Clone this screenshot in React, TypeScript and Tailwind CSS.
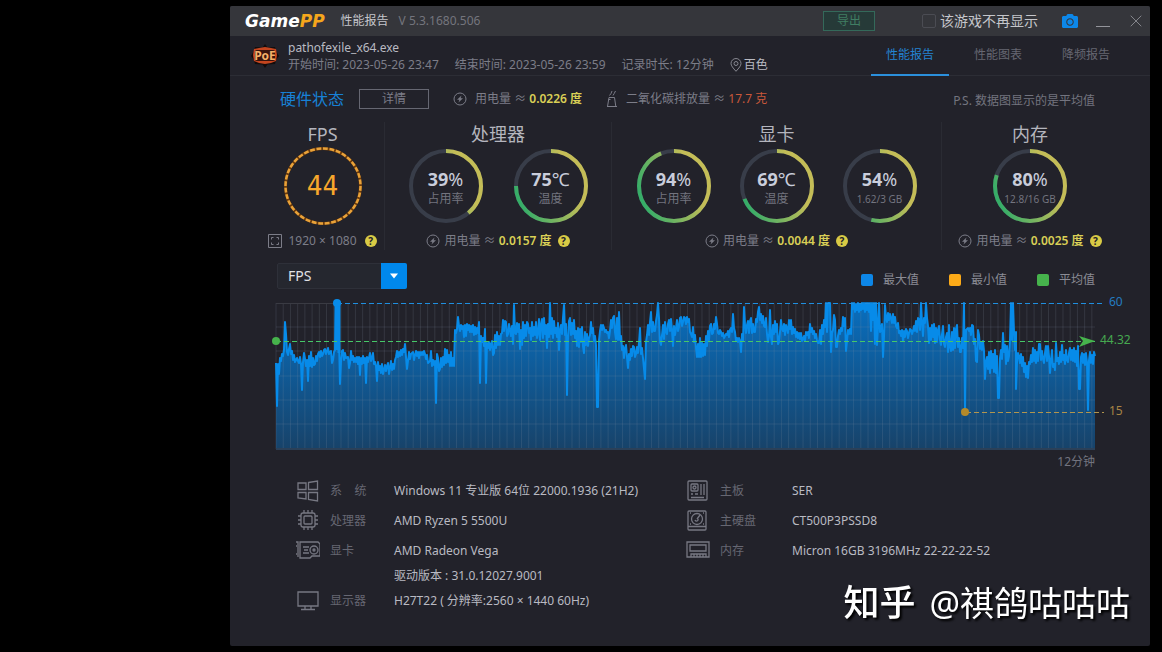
import { useId, useState, type ReactNode } from 'react';
import { FaCamera } from 'react-icons/fa';
import { LuX } from 'react-icons/lu';

// Chart space: x 276..1095 is the recording time, y 303 is 60 fps and y 449 is 0 fps.
// Each sample is [x, first y, second y].
const SAMPLES: [number, number, number][] = [
  [276, 363, 406], [278, 364, 374], [280, 358, 361], [282, 354, 356], [284, 350, 322], [286, 334, 352],
  [288, 355, 349], [290, 344, 354], [292, 351, 360], [294, 355, 362], [297, 358, 361], [299, 363, 357],
  [301, 364, 390], [303, 362, 353], [305, 359, 366], [307, 360, 381], [309, 356, 366], [311, 352, 367],
  [313, 358, 365], [315, 364, 356], [317, 361, 354], [319, 352, 357], [321, 351, 356], [323, 354, 350],
  [325, 349, 354], [327, 351, 348], [329, 354, 352], [331, 351, 363], [333, 360, 352], [335, 350, 303],
  [337, 303, 303], [339, 340, 384], [341, 362, 351], [343, 350, 360], [345, 353, 358], [348, 357, 368],
  [350, 363, 351], [352, 360, 356], [354, 362, 358], [356, 362, 357], [358, 364, 357], [360, 375, 358],
  [362, 364, 356], [364, 363, 358], [366, 383, 357], [368, 362, 358], [370, 353, 361], [372, 358, 353],
  [374, 364, 362], [376, 366, 381], [378, 362, 370], [380, 366, 373], [382, 364, 374], [384, 370, 365],
  [386, 371, 366], [388, 363, 374], [390, 368, 361], [392, 370, 364], [394, 369, 360], [396, 357, 351],
  [398, 357, 352], [400, 356, 350], [402, 355, 349], [404, 352, 344], [406, 357, 369], [408, 361, 352],
  [410, 359, 354], [413, 352, 360], [415, 355, 351], [417, 356, 352], [419, 358, 352], [421, 355, 352],
  [423, 355, 351], [425, 354, 359], [427, 355, 363], [430, 361, 351], [432, 366, 360], [434, 365, 361],
  [436, 403, 354], [438, 358, 371], [440, 369, 358], [442, 367, 357], [444, 365, 349], [446, 363, 350],
  [448, 362, 355], [450, 366, 352], [452, 366, 358], [454, 366, 330], [456, 333, 329], [458, 317, 326],
  [460, 331, 325], [462, 329, 326], [464, 337, 325], [466, 336, 324], [468, 330, 325], [470, 332, 326],
  [472, 332, 325], [474, 335, 327], [476, 334, 328], [478, 333, 322], [480, 383, 336], [482, 342, 338],
  [484, 346, 329], [486, 383, 343], [488, 348, 342], [490, 350, 344], [492, 341, 355], [494, 353, 335],
  [496, 348, 332], [498, 345, 336], [500, 345, 334], [502, 333, 320], [504, 331, 321], [506, 322, 336],
  [508, 334, 324], [510, 330, 336], [512, 326, 344], [514, 305, 333], [516, 334, 323], [518, 332, 324],
  [520, 349, 330], [522, 345, 322], [524, 338, 325], [526, 336, 322], [528, 324, 333], [530, 328, 340],
  [532, 322, 336], [534, 327, 335], [536, 322, 338], [538, 333, 319], [540, 340, 325], [542, 319, 338],
  [544, 318, 334], [546, 325, 348], [548, 324, 337], [550, 303, 334], [552, 318, 338], [554, 321, 333],
  [556, 328, 337], [558, 323, 350], [560, 330, 325], [562, 334, 318], [564, 305, 335], [566, 324, 395],
  [568, 338, 321], [570, 318, 335], [572, 323, 334], [574, 320, 338], [576, 331, 346], [578, 328, 347],
  [580, 329, 342], [582, 327, 346], [584, 353, 332], [586, 345, 334], [588, 346, 338], [590, 335, 322],
  [592, 333, 328], [594, 341, 336], [596, 345, 407], [598, 407, 340], [600, 331, 325], [602, 330, 325],
  [604, 328, 332], [606, 330, 333], [608, 332, 338], [610, 331, 320], [612, 328, 318], [614, 316, 332],
  [616, 339, 318], [618, 340, 312], [620, 340, 336], [622, 350, 346], [624, 358, 348], [626, 345, 357],
  [628, 368, 354], [630, 360, 349], [632, 356, 346], [634, 347, 357], [636, 354, 347], [638, 353, 343],
  [640, 328, 354], [642, 348, 358], [645, 379, 342], [647, 335, 325], [649, 335, 322], [651, 312, 332],
  [653, 322, 331], [655, 331, 321], [657, 315, 303], [659, 318, 342], [661, 345, 335], [663, 325, 339],
  [665, 322, 332], [667, 334, 324], [669, 320, 331], [671, 319, 330], [673, 346, 326], [675, 335, 328],
  [677, 320, 331], [679, 327, 318], [681, 317, 326], [683, 322, 317], [685, 318, 324], [687, 317, 322],
  [689, 319, 332], [691, 334, 337], [693, 327, 342], [695, 335, 348], [697, 357, 344], [699, 357, 338],
  [701, 357, 343], [703, 356, 344], [705, 355, 336], [707, 346, 331], [709, 340, 326], [711, 324, 334],
  [713, 333, 324], [715, 329, 317], [717, 324, 333], [719, 334, 330], [721, 332, 336], [723, 333, 338],
  [725, 336, 334], [727, 335, 331], [729, 337, 330], [731, 328, 332], [733, 314, 328], [735, 332, 341],
  [737, 338, 342], [739, 338, 341], [741, 352, 334], [743, 341, 307], [745, 325, 333], [747, 325, 321],
  [749, 333, 321], [751, 318, 333], [753, 324, 332], [755, 332, 319], [757, 322, 312], [759, 307, 320],
  [761, 314, 323], [763, 316, 326], [765, 327, 318], [767, 334, 342], [769, 336, 310], [771, 337, 344],
  [773, 325, 334], [775, 321, 332], [777, 324, 344], [779, 342, 332], [781, 320, 329], [783, 331, 324],
  [785, 335, 325], [787, 328, 333], [789, 320, 329], [791, 320, 334], [793, 327, 333], [795, 329, 337],
  [797, 332, 338], [799, 333, 339], [801, 333, 341], [803, 339, 336], [805, 341, 332], [807, 335, 332],
  [809, 338, 324], [811, 332, 328], [813, 334, 331], [815, 338, 334], [817, 340, 343], [819, 343, 330],
  [821, 344, 325], [823, 334, 320], [825, 327, 303], [827, 332, 303], [829, 303, 303], [831, 352, 333],
  [833, 330, 315], [835, 320, 347], [837, 347, 336], [839, 330, 334], [841, 328, 331], [843, 317, 326],
  [845, 318, 351], [847, 341, 330], [849, 334, 329], [851, 334, 303], [853, 309, 303], [855, 312, 304],
  [857, 310, 303], [859, 312, 304], [861, 310, 303], [863, 309, 303], [865, 312, 303], [867, 310, 303],
  [869, 312, 303], [871, 331, 303], [873, 320, 303], [875, 344, 303], [877, 345, 326], [879, 303, 332],
  [881, 330, 324], [883, 357, 337], [885, 305, 318], [887, 322, 313], [889, 320, 314], [891, 318, 323],
  [893, 314, 323], [895, 317, 326], [897, 328, 323], [899, 333, 331], [901, 336, 330], [903, 341, 331],
  [905, 337, 329], [907, 331, 338], [909, 333, 329], [911, 330, 334], [913, 331, 326], [915, 331, 321],
  [917, 332, 318], [919, 320, 330], [921, 303, 322], [923, 336, 318], [925, 323, 303], [927, 318, 326],
  [929, 343, 328], [931, 340, 325], [933, 337, 324], [935, 343, 328], [937, 342, 330], [939, 326, 340],
  [941, 345, 334], [943, 326, 344], [945, 347, 337], [947, 333, 352], [949, 325, 347], [951, 351, 332],
  [953, 350, 328], [955, 348, 329], [957, 325, 347], [959, 338, 352], [961, 352, 338], [963, 348, 303],
  [965, 412, 330], [967, 329, 328], [969, 331, 328], [971, 335, 325], [973, 326, 344], [975, 339, 361],
  [977, 362, 330], [979, 335, 349], [981, 342, 350], [983, 341, 351], [985, 379, 362], [987, 357, 369],
  [989, 352, 373], [991, 351, 368], [993, 354, 372], [995, 350, 373], [997, 356, 398], [999, 398, 358],
  [1001, 350, 359], [1003, 333, 352], [1005, 345, 364], [1007, 346, 361], [1009, 356, 340], [1011, 303, 340],
  [1013, 303, 332], [1015, 350, 332], [1016, 389, 362], [1018, 353, 356], [1020, 363, 354], [1022, 366, 357],
  [1024, 372, 363], [1026, 377, 366], [1028, 378, 362], [1030, 364, 355], [1032, 362, 348], [1034, 361, 350],
  [1036, 363, 352], [1038, 361, 344], [1040, 344, 360], [1042, 351, 359], [1044, 363, 353], [1046, 346, 361],
  [1048, 346, 356], [1050, 373, 360], [1052, 350, 367], [1054, 364, 370], [1056, 343, 361], [1058, 358, 364],
  [1060, 352, 362], [1062, 345, 360], [1064, 355, 364], [1066, 350, 360], [1068, 362, 353], [1070, 348, 360],
  [1072, 350, 361], [1074, 348, 362], [1076, 351, 366], [1078, 346, 389], [1080, 389, 357], [1082, 353, 363],
  [1084, 354, 365], [1086, 353, 362], [1088, 410, 360], [1090, 352, 363], [1092, 355, 364], [1094, 352, 356],
];

const LINE = SAMPLES.map(([x, a, b]) => `${x},${a} ${x + 1},${b}`).join(' ');
const COLUMNS = Array.from({ length: 114 }, (_, i) => 276 + i * 7.22);
const ROWS = [327, 351, 376, 400, 424];

function BoltIcon() {
  return (
    <svg className="size-3.5 shrink-0" viewBox="0 0 14 14" fill="none" stroke="#7c7d88" aria-hidden>
      <circle cx="7" cy="7" r="6" />
      <path d="M8.5 3.5 4 7.8h2.4L5.5 10.500 10 6.300H7.600z" fill="#7c7d88" stroke="none" />
    </svg>
  );
}

function ChimneyIcon() {
  return (
    <svg className="h-[18px] w-3 shrink-0" viewBox="0 0 12 18" fill="none" stroke="#7c7d88" aria-hidden>
      <path d="M3 7.500h5.500l1.300 9H1.500zM1 16.500h10M2.500 9.500h2M3.500 5.500l1.500-2 1-2.500M7 5.500l1.200-2L9.500 1" />
    </svg>
  );
}

function PinIcon() {
  return (
    <svg className="h-3.5 w-3 shrink-0" viewBox="0 0 12 14" fill="none" stroke="#85868f" aria-hidden>
      <path d="M6 13.300C3 10 1 7.700 1 5.500a5 5 0 0 1 10 0c0 2.200-2 4.500-5 7.800z" />
      <circle cx="6" cy="5.500" r="2" />
    </svg>
  );
}

function GameIcon() {
  return (
    <svg className="h-6 w-7" viewBox="0 0 28 24" aria-hidden>
      <path d="M14 0l2.500 3.500L24 3l1 4 3 5-3 4-1 4-7.500.5L14 24l-2.500-3.500L4 20l-1-4-3-4 3-5 1-4 7.500.5z" fill="#120c0c" />
      <path d="M3 5l5-1 6-1 6 1 5 1 1 6-1 6-5 2-6 1-6-1-5-2-1-6z" fill="#c4451f" />
      <rect x="4" y="6" width="20" height="11" rx="2" fill="#38140d" />
      <text x="14" y="16" textAnchor="middle" fontSize="12" fontWeight="700" fill="#f3b069">PoE</text>
    </svg>
  );
}

function Help() {
  return (
    <button type="button" aria-label="说明" className="ml-0.5 flex size-3 shrink-0 items-center justify-center rounded-full bg-[#d9cb45] text-[10px] leading-3 font-bold text-[#22222a]">
      ?
    </button>
  );
}

function Energy({ value }: { value: string }) {
  return (
    <div className="mt-1.5 flex h-[18px] items-center justify-center gap-1 text-xs text-[#7c7d88]">
      <BoltIcon />
      <span>用电量 ≈ <b className="font-semibold text-[#d9cf56]">{value} 度</b></span>
      <Help />
    </div>
  );
}

function Gauge({ percent, value, unit, label }: { percent: number; value: number; unit: string; label: string }) {
  const id = useId();
  return (
    <div className="grid size-[74px] place-items-center">
      <svg className="col-start-1 row-start-1 size-[74px]" viewBox="0 0 74 74" fill="none" strokeWidth="4" aria-hidden>
        <defs>
          <linearGradient id={id} gradientUnits="userSpaceOnUse" x1="0" y1="60" x2="74" y2="30">
            <stop offset="0.1" stopColor="#36ad68" />
            <stop offset="0.8" stopColor="#c4bd57" />
          </linearGradient>
        </defs>
        <circle cx="37" cy="37" r="35" stroke="#383d49" />
        <path d="M37 2a35 35 0 0 1 0 70a35 35 0 0 1 0-70" stroke={`url(#${id})`} pathLength={100} strokeDasharray={`${percent} 100`} />
      </svg>
      <div className="col-start-1 row-start-1 pt-1.5 text-center">
        <p className="text-lg leading-5 text-[#c9cddb]"><b>{value}</b>{unit}</p>
        <p className={label.includes('GB') ? 'text-[10px] leading-5 text-[#73747f]' : 'text-xs leading-5 text-[#73747f]'}>{label}</p>
      </div>
    </div>
  );
}

function Panel({ title, last, children }: { title: string; last?: boolean; children: ReactNode }) {
  return (
    <section className={last ? 'min-w-0' : 'min-w-0 border-r border-[#2a2b33]'}>
      <h2 className="text-center text-lg leading-6 text-[#b4b5bd]">{title}</h2>
      {children}
    </section>
  );
}

function Legend({ color, label }: { color: string; label: string }) {
  return (
    <li className="flex items-center gap-2.5">
      <span className={`size-3 rounded-xs ${color}`} />
      {label}
    </li>
  );
}

function FpsChart() {
  return (
    <svg className="block w-full" viewBox="268 293 866 179" role="img" aria-label="FPS">
      <defs>
        <linearGradient id="fps-area" gradientUnits="userSpaceOnUse" x1="0" y1="303" x2="0" y2="449">
          <stop offset="0" stopColor="#0088f0" stopOpacity="0.75" />
          <stop offset="1" stopColor="#0088f0" stopOpacity="0.32" />
        </linearGradient>
      </defs>
      <polygon points={`276,449 ${LINE} 1095,449`} fill="url(#fps-area)" />
      <g stroke="#8d97a8" strokeOpacity="0.18">
        {COLUMNS.map((x) => (
          <line key={x} x1={x} x2={x} y1="303" y2="449" />
        ))}
        {ROWS.map((y) => (
          <line key={y} x1="276" x2="1095" y1={y} y2={y} />
        ))}
      </g>
      <line x1="276" x2="337" y1="303.500" y2="303.500" stroke="#3a3b43" />
      <line x1="276" x2="1095" y1="449" y2="449" stroke="#2b4058" strokeWidth="2" />
      <polyline points={LINE} fill="none" stroke="#078be9" strokeWidth="2" strokeLinejoin="round" />
      <path d="M336 350V303h3v50" fill="none" stroke="#078be9" strokeWidth="3" />
      <g fill="none" strokeDasharray="5 3">
        <line x1="337" x2="1104" y1="303.500" y2="303.500" stroke="#1f8fe0" />
        <line x1="276" x2="1095" y1="341.500" y2="341.500" stroke="#46c768" />
        <line x1="966" x2="1104" y1="412.500" y2="412.500" stroke="#b1954e" />
      </g>
      <circle cx="337" cy="303" r="4" fill="#078be9" />
      <circle cx="276" cy="341" r="4" fill="#46b34c" />
      <circle cx="965" cy="412" r="4" fill="#b58a2a" />
      <path d="M1079 336l16 5-16 6 4-6z" fill="#46b34c" />
      <g fontSize="12">
        <text x="1109" y="306" fill="#247cc0">60</text>
        <text x="1100" y="344" fill="#46a850">44.32</text>
        <text x="1109" y="415" fill="#a98445">15</text>
        <text x="1095" y="466" textAnchor="end" fill="#73747f">12分钟</text>
      </g>
    </svg>
  );
}

const ICONS: Record<string, ReactNode> = {
  system: <path d="M2 4h8v6.500H2zM12.500 3.500l9-1.500v8.500h-9zM2 13.500h8V20l-8-1zM12.500 13.500h9V22l-9-1.500z" />,
  cpu: (
    <>
      <rect x="5" y="4" width="14" height="14" rx="2" />
      <rect x="8" y="7" width="8" height="8" rx="1" />
      <path d="M8 4V1M12 4V1M16 4V1M8 21v-3M12 21v-3M16 21v-3M5 7H2M5 11H2M5 15H2M22 7h-3M22 11h-3M22 15h-3" />
    </>
  ),
  gpu: (
    <>
      <path d="M0 3h2v15M0 7h1M0 15h1M4 3h18l2 2v12h-8l-2 2H4zM7 8h6M8 11h4M7 14h6" />
      <circle cx="18" cy="11" r="4" />
      <circle cx="18" cy="11" r="1" />
    </>
  ),
  display: <path d="M2 3h20v14H2zM9 17v3M15 17v3M5 20.500h14" />,
  board: (
    <>
      <rect x="2" y="2" width="19" height="19" rx="1" />
      <rect x="5" y="5" width="7" height="7" rx="1" />
      <circle cx="8.500" cy="8.500" r="1.500" />
      <path d="M15 5v11M18 5v11M5 15h2M9 15h3M5 18.500h13" />
    </>
  ),
  disk: (
    <>
      <rect x="2" y="2" width="18" height="19" rx="1" />
      <circle cx="11" cy="10" r="5.500" />
      <path d="M11 10l3-4M9 11a1.500 1.500 0 1 0 3-1M2 17.500h18M4 4h1M17 4h1M4 15h1M17 15h1" />
    </>
  ),
  memory: <path d="M1 3h22v15h-3v-3H5v3H1zM4 6h16v6H4zM5 18h15M8 15v3M11 15v3M14 15v3M17 15v3" />,
};

function Spec({ icon, label, children }: { icon: string; label: string; children: ReactNode }) {
  return (
    <div className="flex h-[30px] items-center">
      <dt className="flex shrink-0 items-center gap-2.5 text-xs text-[#666772]">
        <svg className="size-6" viewBox="0 0 24 24" fill="none" stroke="#777883" strokeWidth="1.3" aria-hidden>
          {ICONS[icon]}
        </svg>
        <span className="w-16 whitespace-pre">{label}</span>
      </dt>
      {children}
    </div>
  );
}

const TABS = ['性能报告', '性能图表', '降频报告'];

const App = () => {
  const [tab, setTab] = useState(TABS[0]);
  const [hidden, setHidden] = useState(false);

  return (
    <div className="flex min-h-screen bg-black py-1.5 pr-3 pl-[230px] font-['Noto_Sans','Noto_Sans_CJK_SC',sans-serif] text-xs text-[#7c7d88]">
      <main className="relative flex min-w-0 flex-1 flex-col overflow-hidden rounded-xs bg-[#22222a] whitespace-nowrap">
        <header className="flex h-[30px] items-center bg-[#35363b] pr-1 pl-[15px]">
          <span className="font-['DejaVu_Sans',sans-serif] text-[17px] leading-5 font-bold text-white italic">
            Game<span className="text-[#f5a71c]">PP</span>
          </span>
          <h1 className="ml-4 text-xs text-[#c5c6cb]">性能报告</h1>
          <span className="ml-2.5 text-[#74757d]">V 5.3.1680.506</span>
          <button type="button" className="ml-auto h-5 w-[52px] border border-[#34695a] bg-[#263a38] text-[#407e63]">
            导出
          </button>
          <label className="ml-[47px] flex items-center gap-1 text-sm text-[#c5c6cb]">
            <input
              type="checkbox"
              checked={hidden}
              onChange={(e) => setHidden(e.target.checked)}
              className="size-3.5 appearance-none rounded-xs border border-[#4b4c53] checked:bg-[#0d87e8]"
            />
            该游戏不再显示
          </label>
          <button type="button" aria-label="截图" className="ml-6 text-[#0d87e8]">
            <FaCamera className="size-4" />
          </button>
          <button type="button" aria-label="最小化" className="ml-[18px] h-3 w-3.5 border-b border-[#94959b]" />
          <button type="button" aria-label="关闭" className="ml-4 text-[#94959b]">
            <LuX className="size-5" strokeWidth={1} />
          </button>
        </header>

        <div className="flex h-10 border-b border-[#2c2d35] pr-[25px] pl-[21px]">
          <div className="flex items-center">
            <GameIcon />
          </div>
          <div className="ml-[9px] pt-1 leading-4">
            <p className="text-[#b9bac2]">pathofexile_x64.exe</p>
            <div className="flex gap-4 leading-[18px]">
              <span>开始时间: 2023-05-26 23:47</span>
              <span>结束时间: 2023-05-26 23:59</span>
              <span>记录时长: 12分钟</span>
              <span className="flex items-center gap-0.5 text-[#b9bac2]">
                <PinIcon />
                百色
              </span>
            </div>
          </div>
          <nav className="ml-auto flex gap-2.5">
            {TABS.map((name) => (
              <button
                key={name}
                type="button"
                onClick={() => setTab(name)}
                className={
                  name === tab
                    ? 'h-10 w-[78px] border-b-2 border-[#2b90dc] text-[#2483d2]'
                    : 'h-10 w-[78px] border-b-2 border-transparent text-[#666772]'
                }
              >
                {name}
              </button>
            ))}
          </nav>
        </div>

        <div className="flex h-[46px] items-center pr-[55px] pl-[50px]">
          <h2 className="text-base text-[#1781d6]">硬件状态</h2>
          <button type="button" className="ml-[15px] h-5 w-[70px] border border-[#666772]">
            详情
          </button>
          <p className="ml-6 flex items-center gap-2">
            <BoltIcon />
            <span>用电量 ≈ <b className="font-semibold text-[#d9cf56]">0.0226 度</b></span>
          </p>
          <p className="ml-6 flex items-center gap-2">
            <ChimneyIcon />
            <span>二氧化碳排放量 ≈ <span className="text-[#c9583a]">17.7 克</span></span>
          </p>
          <p className="ml-auto pt-1 text-[#73747f]">P.S. 数据图显示的是平均值</p>
        </div>

        <div className="grid grid-cols-[124fr_227fr_330fr_176fr] pr-8 pl-[31px]">
          <Panel title="FPS">
            <div className="grid h-20 place-items-center">
              <svg className="col-start-1 row-start-1 size-20" viewBox="0 0 80 80" fill="none" aria-hidden>
                <circle cx="40" cy="40" r="37.500" stroke="#6d3c0c" strokeWidth="3" />
                <circle cx="40" cy="40" r="37.500" stroke="#e8a23a" strokeWidth="2.500" pathLength={108} strokeDasharray="2.200 0.800" />
              </svg>
              <span className="col-start-1 row-start-1 font-['DejaVu_Sans_Mono',monospace] text-[26px] text-[#f7a72c]">44</span>
            </div>
            <div className="mt-1.5 flex h-[18px] items-center justify-center gap-1.5">
              <svg className="size-3.5" viewBox="0 0 14 14" fill="none" stroke="#7c7d88" aria-hidden>
                <path d="M.5.5h13v13H.5zM3.500 5.500v-2h2M8.500 3.500h2v2M10.500 8.500v2h-2M5.500 10.500h-2v-2" />
              </svg>
              <span>1920 × 1080</span>
              <Help />
            </div>
          </Panel>
          <Panel title="处理器">
            <div className="flex h-20 items-center justify-center gap-[31px]">
              <Gauge percent={39} value={39} unit="%" label="占用率" />
              <Gauge percent={75} value={75} unit="℃" label="温度" />
            </div>
            <Energy value="0.0157" />
          </Panel>
          <Panel title="显卡">
            <div className="flex h-20 items-center justify-center gap-[29px]">
              <Gauge percent={94} value={94} unit="%" label="占用率" />
              <Gauge percent={69} value={69} unit="℃" label="温度" />
              <Gauge percent={54} value={54} unit="%" label="1.62/3 GB" />
            </div>
            <Energy value="0.0044" />
          </Panel>
          <Panel title="内存" last>
            <div className="flex h-20 items-center justify-center">
              <Gauge percent={80} value={80} unit="%" label="12.8/16 GB" />
            </div>
            <Energy value="0.0025" />
          </Panel>
        </div>

        <div className="mt-[13px] flex items-center justify-between pr-[55px] pl-[47px]">
          <div className="relative h-[26px] w-[130px]">
            <select aria-label="指标" className="h-full w-full appearance-none rounded-xs border border-[#2e3039] bg-[#25272f] pl-2.5 text-sm leading-5 text-[#e1e2e6]">
              <option>FPS</option>
            </select>
            <span className="pointer-events-none absolute inset-y-0 right-0 flex w-[26px] items-center justify-center rounded-r-xs bg-[#0088ec]">
              <svg className="h-1.5 w-2" viewBox="0 0 8 6" fill="#fff" aria-hidden>
                <path d="M0 .5h8L4 5.500z" />
              </svg>
            </span>
          </div>
          <ul className="flex gap-[30px] pt-2 text-[#8b8c95]">
            <Legend color="bg-[#0d87e8]" label="最大值" />
            <Legend color="bg-[#fcaa18]" label="最小值" />
            <Legend color="bg-[#46b34c]" label="平均值" />
          </ul>
        </div>

        <div className="mt-1 mr-4 ml-[38px]">
          <FpsChart />
        </div>

        <div className="mt-1 grid grid-cols-[390fr_448fr] pr-4 pl-[66px] text-[#b9bac2]">
          <dl>
            <Spec icon="system" label="系    统"><dd>Windows 11 专业版 64位 22000.1936 (21H2)</dd></Spec>
            <Spec icon="cpu" label="处理器"><dd>AMD Ryzen 5 5500U</dd></Spec>
            <Spec icon="gpu" label="显卡"><dd>AMD Radeon Vega</dd></Spec>
            <dd className="h-5 pl-[98px] leading-5">驱动版本 : 31.0.12027.9001</dd>
            <Spec icon="display" label="显示器"><dd>H27T22 ( 分辨率:2560 × 1440 60Hz)</dd></Spec>
          </dl>
          <dl>
            <Spec icon="board" label="主板"><dd className="pl-2">SER</dd></Spec>
            <Spec icon="disk" label="主硬盘"><dd className="pl-2">CT500P3PSSD8</dd></Spec>
            <Spec icon="memory" label="内存"><dd className="pl-2">Micron 16GB 3196MHz 22-22-22-52</dd></Spec>
          </dl>
        </div>

        <p className="absolute right-5 bottom-5 flex items-center gap-3.5 text-[34px] text-white drop-shadow-[2px_2px_1px_#000]">
          <span className="text-4xl font-medium">知乎</span>
          <span>@祺鸽咕咕咕</span>
        </p>
      </main>
    </div>
  );
};

export default App;
